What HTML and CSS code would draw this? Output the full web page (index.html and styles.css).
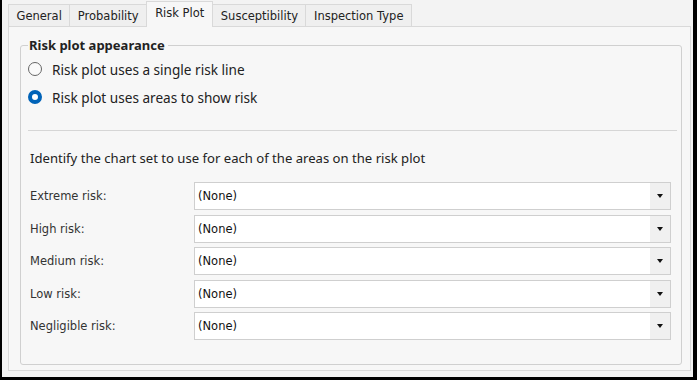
FILE: index.html
```html
<!DOCTYPE html>
<html lang="en">
<head>
    <meta charset="UTF-8">
    <title>Risk Plot</title>
    <link rel="stylesheet" href="styles.css">
</head>
<body>
    <div class="window">
        <div class="tabs">
            <div class="tab">General</div>
            <div class="tab">Probability</div>
            <div class="tab active">Risk Plot</div>
            <div class="tab">Susceptibility</div>
            <div class="tab">Inspection Type</div>
        </div>

        <div class="panel">
            <div class="group">
                <div class="group-title">Risk plot appearance</div>

                <label class="radio-row first">
                    <span class="radio"></span>
                    Risk plot uses a single risk line
                </label>
                <label class="radio-row">
                    <span class="radio checked"></span>
                    Risk plot uses areas to show risk
                </label>

                <div class="separator"></div>

                <p class="intro">Identify the chart set to use for each of the areas on the risk plot</p>

                <div class="combo-rows">
                    <div class="combo-row">
                        <span class="combo-label">Extreme risk:</span>
                        <div class="combo"><span class="combo-value">(None)</span><span class="combo-btn"></span></div>
                    </div>
                    <div class="combo-row">
                        <span class="combo-label">High risk:</span>
                        <div class="combo"><span class="combo-value">(None)</span><span class="combo-btn"></span></div>
                    </div>
                    <div class="combo-row">
                        <span class="combo-label">Medium risk:</span>
                        <div class="combo"><span class="combo-value">(None)</span><span class="combo-btn"></span></div>
                    </div>
                    <div class="combo-row">
                        <span class="combo-label">Low risk:</span>
                        <div class="combo"><span class="combo-value">(None)</span><span class="combo-btn"></span></div>
                    </div>
                    <div class="combo-row">
                        <span class="combo-label">Negligible risk:</span>
                        <div class="combo"><span class="combo-value">(None)</span><span class="combo-btn"></span></div>
                    </div>
                </div>
            </div>
        </div>
    </div>
</body>
</html>
```

FILE: styles.css
```css
:root {
    --frame: #000000;
    --window-bg: #f3f3f3;
    --panel-bg: #f7f7f7;
    --border: #d9d9d9;
    --group-border: #d0d0d0;
    --text: #1a1a1a;
    --blue: #0063b8;
}

* {
    box-sizing: border-box;
}

body {
    margin: 0;
    background: var(--frame);
    color: var(--text);
}

.window {
    width: 691px;
    height: 377px;
    margin-left: 2px;
    background: var(--window-bg);
    padding: 2px 2px 0 6px;
    display: flex;
    flex-direction: column;
}

/* tab strip */
.tabs {
    display: flex;
    align-items: flex-end;
    height: 24px;
    padding-left: 1px;
    position: relative;
    z-index: 1;
}

.tab {
    height: 22px;
    line-height: 22px;
    padding: 0 7.5px;
    margin-left: -1px;
    border: 1px solid var(--border);
    border-bottom: none;
    background: #efefef;
    font-family: "DejaVu Sans", sans-serif;
    font-size: 11.5px;
    color: #222;
}

.tab.active {
    height: 26px;
    line-height: 22px;
    margin-bottom: -1px;
    padding: 0 8px;
    background: var(--panel-bg);
    position: relative;
    z-index: 2;
}

.panel {
    flex: 1;
    margin-bottom: 6px;
    border: 1px solid var(--border);
    background: var(--panel-bg);
    padding: 18px 8px 0 11px;
}

/* group box */
.group {
    border: 1px solid var(--group-border);
    border-radius: 3px;
    padding: 0 4px 24px 7px;
}

.group-title {
    display: table;
    margin: -10px 0 0 0;
    padding: 0 3px 0 1px;
    background: var(--panel-bg);
    font-family: "Noto Sans", sans-serif;
    font-weight: 700;
    font-size: 13px;
    line-height: 18px;
    color: #222;
}

.radio-row {
    display: flex;
    align-items: center;
    height: 22px;
    gap: 10px;
    font-family: "Noto Sans", sans-serif;
    font-size: 13.6px;
    color: #222;
}

.radio-row.first {
    margin-top: 4px;
}

.radio-row + .radio-row {
    margin-top: 6px;
}

.radio {
    width: 14px;
    height: 14px;
    border-radius: 50%;
    border: 1px solid #666;
    background: #fafafa;
    flex-shrink: 0;
}

.radio.checked {
    border: 4.5px solid var(--blue);
    background: #fff;
}

.separator {
    height: 1px;
    margin-top: 22px;
    background: #d6d6d6;
}

.intro {
    margin: 18px 0 0 2px;
    line-height: 18px;
    font-family: "Noto Sans", sans-serif;
    font-size: 13.1px;
    color: #222;
}

.combo-rows {
    margin-top: 15px;
    display: flex;
    flex-direction: column;
    gap: 4.5px;
}

.combo-row {
    display: flex;
    align-items: center;
    height: 28px;
    padding-right: 6px;
}

.combo-label {
    width: 166px;
    padding-left: 2px;
    font-family: "DejaVu Sans", sans-serif;
    font-size: 11.5px;
    color: #333;
}

.combo {
    flex: 1;
    height: 28px;
    display: flex;
    border: 1px solid #cfcfcf;
    background: #fff;
}

.combo-value {
    flex: 1;
    padding-left: 3px;
    line-height: 26px;
    font-family: "DejaVu Sans", sans-serif;
    font-size: 11.5px;
    color: #111;
}

.combo-btn {
    width: 20px;
    background: #f0f0f0;
    display: flex;
    align-items: center;
    justify-content: center;
}

.combo-btn::after {
    content: "";
    border-left: 3.5px solid transparent;
    border-right: 3.5px solid transparent;
    border-top: 4px solid #111;
}
```
